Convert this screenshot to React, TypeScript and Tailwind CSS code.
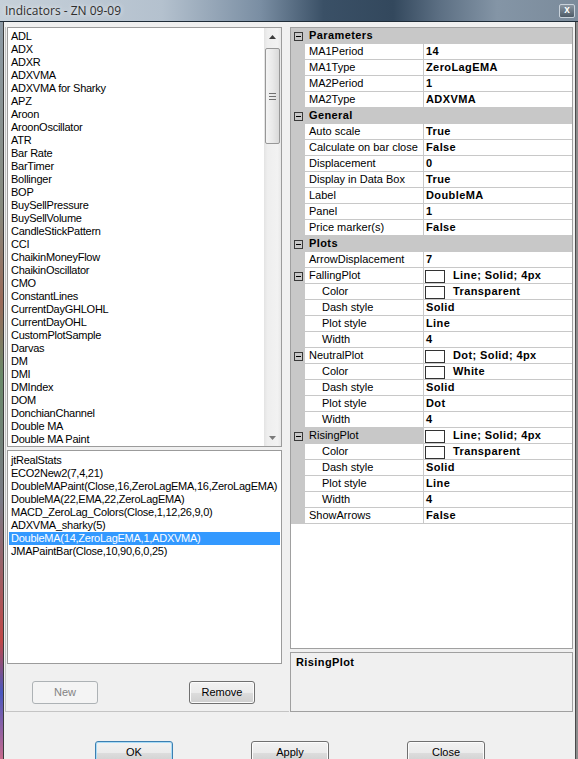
import React from 'react';

const list1 = [
  'ADL', 'ADX', 'ADXR', 'ADXVMA', 'ADXVMA for Sharky', 'APZ', 'Aroon', 'AroonOscillator', 'ATR', 'Bar Rate',
  'BarTimer', 'Bollinger', 'BOP', 'BuySellPressure', 'BuySellVolume', 'CandleStickPattern', 'CCI',
  'ChaikinMoneyFlow', 'ChaikinOscillator', 'CMO', 'ConstantLines', 'CurrentDayGHLOHL', 'CurrentDayOHL',
  'CustomPlotSample', 'Darvas', 'DM', 'DMI', 'DMIndex', 'DOM', 'DonchianChannel', 'Double MA', 'Double MA Paint',
];

const list2 = [
  'jtRealStats',
  'ECO2New2(7,4,21)',
  'DoubleMAPaint(Close,16,ZeroLagEMA,16,ZeroLagEMA)',
  'DoubleMA(22,EMA,22,ZeroLagEMA)',
  'MACD_ZeroLag_Colors(Close,1,12,26,9,0)',
  'ADXVMA_sharky(5)',
  'DoubleMA(14,ZeroLagEMA,1,ADXVMA)',
  'JMAPaintBar(Close,10,90,6,0,25)',
];

type Row = { t: 'cat' | 'p' | 'g' | 'c'; n: string; v?: string; sw?: boolean; sel?: boolean };

const rows: Row[] = [
  { t: 'cat', n: 'Parameters' },
  { t: 'p', n: 'MA1Period', v: '14' },
  { t: 'p', n: 'MA1Type', v: 'ZeroLagEMA' },
  { t: 'p', n: 'MA2Period', v: '1' },
  { t: 'p', n: 'MA2Type', v: 'ADXVMA' },
  { t: 'cat', n: 'General' },
  { t: 'p', n: 'Auto scale', v: 'True' },
  { t: 'p', n: 'Calculate on bar close', v: 'False' },
  { t: 'p', n: 'Displacement', v: '0' },
  { t: 'p', n: 'Display in Data Box', v: 'True' },
  { t: 'p', n: 'Label', v: 'DoubleMA' },
  { t: 'p', n: 'Panel', v: '1' },
  { t: 'p', n: 'Price marker(s)', v: 'False' },
  { t: 'cat', n: 'Plots' },
  { t: 'p', n: 'ArrowDisplacement', v: '7' },
  { t: 'g', n: 'FallingPlot', v: 'Line; Solid; 4px', sw: true },
  { t: 'c', n: 'Color', v: 'Transparent', sw: true },
  { t: 'c', n: 'Dash style', v: 'Solid' },
  { t: 'c', n: 'Plot style', v: 'Line' },
  { t: 'c', n: 'Width', v: '4' },
  { t: 'g', n: 'NeutralPlot', v: 'Dot; Solid; 4px', sw: true },
  { t: 'c', n: 'Color', v: 'White', sw: true },
  { t: 'c', n: 'Dash style', v: 'Solid' },
  { t: 'c', n: 'Plot style', v: 'Dot' },
  { t: 'c', n: 'Width', v: '4' },
  { t: 'g', n: 'RisingPlot', v: 'Line; Solid; 4px', sw: true, sel: true },
  { t: 'c', n: 'Color', v: 'Transparent', sw: true },
  { t: 'c', n: 'Dash style', v: 'Solid' },
  { t: 'c', n: 'Plot style', v: 'Line' },
  { t: 'c', n: 'Width', v: '4' },
  { t: 'p', n: 'ShowArrows', v: 'False' },
];

function MinusBox() {
  return (
    <svg width="9" height="9" viewBox="0 0 9 9" className="block">
      <rect x="0.5" y="0.5" width="8" height="8" fill="none" stroke="#3a3a3a" />
      <line x1="2" y1="4.5" x2="7" y2="4.5" stroke="#000" />
    </svg>
  );
}

function GridRow({ r }: { r: Row }) {
  if (r.t === 'cat') {
    return (
      <div className="flex h-[16px] bg-[#c8c8c8] shrink-0">
        <div className="w-[14px] flex items-center justify-center">
          <MinusBox />
        </div>
        <div className="pl-[4px] font-bold leading-[15px] tracking-[0.4px]">{r.n}</div>
      </div>
    );
  }
  return (
    <div className="flex h-[16px] shrink-0">
      <div className="w-[14px] bg-[#c8c8c8] flex items-center justify-center">
        {r.t === 'g' && <MinusBox />}
      </div>
      <div
        className={
          'w-[119px] border-b border-r border-[#c8c8c8] leading-[15px] whitespace-nowrap overflow-hidden ' +
          (r.t === 'c' ? 'pl-[17px] ' : 'pl-[4px] ') +
          (r.sel ? 'bg-[#c8c8c8]' : 'bg-white')
        }
      >
        {r.n}
      </div>
      <div className="flex-1 border-b border-[#c8c8c8] flex items-start whitespace-nowrap">
        {r.sw ? (
          <>
            <div className="ml-[1px] mt-[2px] w-[20px] h-[13px] border border-[#333] bg-white shrink-0" />
            <span className="ml-[8px] font-bold leading-[15px] tracking-[0.4px]">{r.v}</span>
          </>
        ) : (
          <span className="pl-[2px] font-bold leading-[15px] tracking-[0.4px]">{r.v}</span>
        )}
      </div>
    </div>
  );
}

function Btn({
  children,
  w,
  disabled,
  focused,
}: {
  children: React.ReactNode;
  w: string;
  disabled?: boolean;
  focused?: boolean;
}) {
  const base = 'h-[23px] rounded-[3px] border flex items-center justify-center text-[11px] shrink-0 ';
  if (disabled) {
    return (
      <div className={base + w + ' border-[#adb2b5] bg-[#f4f4f4] text-[#838383]'}>{children}</div>
    );
  }
  return (
    <div
      className={
        base +
        w +
        ' bg-[linear-gradient(#f2f2f2_0%,#ebebeb_50%,#dddddd_51%,#cfcfcf_100%)] text-black ' +
        (focused
          ? 'border-[#3c7fb1] shadow-[inset_0_0_0_1px_#a9dbf6]'
          : 'border-[#707070] shadow-[inset_0_0_0_1px_#fcfcfc]')
      }
    >
      {children}
    </div>
  );
}

function Scrollbar() {
  return (
    <div className="w-[17px] h-full bg-[linear-gradient(90deg,#e3e3e3,#eeeeee_20%,#f2f2f2_80%,#e8e8e8)] flex flex-col items-center shrink-0">
      <div className="h-[18px] w-full flex items-center justify-center">
        <svg width="7" height="4" viewBox="0 0 7 4">
          <polygon points="3.5,0 7,4 0,4" fill="#3c3c3c" />
        </svg>
      </div>
      <div className="mt-[2px] w-[15px] h-[96px] rounded-[2px] border border-[#979797] bg-[linear-gradient(90deg,#f4f4f4,#e9e9e9_50%,#d9d9d9)] flex flex-col items-center justify-center gap-[2px]">
        <div className="w-[7px] h-px bg-[#6f6f6f]" />
        <div className="w-[7px] h-px bg-[#6f6f6f]" />
        <div className="w-[7px] h-px bg-[#6f6f6f]" />
      </div>
      <div className="flex-1" />
      <div className="h-[16px] w-full flex items-center justify-center">
        <svg width="7" height="4" viewBox="0 0 7 4">
          <polygon points="0,0 7,0 3.5,4" fill="#7a7a7a" />
        </svg>
      </div>
    </div>
  );
}

export default function App() {
  return (
    <div className="w-[578px] h-[759px] overflow-hidden bg-[#f0f0f0] flex flex-col font-['Liberation_Sans',Arial,sans-serif] text-[11px] text-black">
      {/* Title bar */}
      <div className="h-[21px] shrink-0 flex items-center justify-between bg-[linear-gradient(90deg,#c6d0d9_0%,#b4c1ce_28%,#7a8ea3_45%,#3a5066_56%,#33485d_68%,#5c6f83_76%,#8495a6_86%,#7b8b9b_100%)]">
        <span className="pl-[5px] font-['Open_Sans','Noto_Sans',sans-serif] text-[12px] text-[#2e2e2e] [text-shadow:0_0_5px_#ffffff]">
          Indicators - ZN 09-09
        </span>
        <div className="mr-[3px] w-[16px] h-[14px] rounded-[2px] border border-[#c9d2db] bg-[linear-gradient(#8a96a2,#4e5b67)] flex items-center justify-center text-white text-[10px] font-bold leading-none pb-[1px]">
          x
        </div>
      </div>
      <div className="h-px shrink-0 bg-[#1f2c38]" />

      {/* Body */}
      <div className="flex-1 flex min-h-0">
        <div className="w-[3px] shrink-0 bg-[linear-gradient(#8c9aa6_0%,#868a7e_25%,#9a6a5a_38%,#6a8a6a_48%,#7a7a86_65%,#c04848_84%,#4a58c0_91%,#c86a8c_100%)]" />
        <div className="w-px shrink-0 bg-[#3c3c3c]" />

        <div className="flex-1 flex flex-col pt-[5px]">
          <div className="flex">
            {/* Left panel */}
            <div className="ml-[1px] w-[284px] border-l border-b border-[#c4c4c4] flex flex-col pb-[7px]">
              <div className="ml-[1px] w-[275px] h-[420px] border border-[#9b9b9b] bg-white flex">
                <div className="flex-1 pt-[2px] pl-[3px] overflow-hidden">
                  {list1.map((s) => (
                    <div key={s} className="h-[13px] leading-[13px] whitespace-nowrap tracking-[-0.25px]">
                      {s}
                    </div>
                  ))}
                </div>
                <Scrollbar />
              </div>
              <div className="mt-[3px] ml-[1px] w-[275px] h-[214px] border border-[#9b9b9b] bg-white pt-[3px] px-[1px]">
                {list2.map((s, i) => (
                  <div
                    key={s}
                    className={
                      'h-[13px] leading-[13px] whitespace-nowrap tracking-[-0.25px] pl-[2px] ' +
                      (i === 6 ? 'bg-[#3399ff] text-white' : '')
                    }
                  >
                    {s}
                  </div>
                ))}
              </div>
              <div className="mt-[17px] flex">
                <div className="ml-[26px]">
                  <Btn w="w-[66px]" disabled>
                    New
                  </Btn>
                </div>
                <div className="ml-[91px]">
                  <Btn w="w-[66px]">Remove</Btn>
                </div>
              </div>
            </div>

            {/* Right panel */}
            <div className="ml-px w-[283px] flex flex-col">
              <div className="h-[622px] border border-[#a0a0a0] bg-white flex flex-col overflow-hidden">
                {rows.map((r, i) => (
                  <GridRow key={i} r={r} />
                ))}
              </div>
              <div className="mt-[3px] h-[60px] border border-[#a0a0a0] bg-[#f0f0f0] pl-[5px] pt-[1px]">
                <span className="font-bold tracking-[0.4px]">RisingPlot</span>
              </div>
            </div>
          </div>

          {/* Bottom buttons */}
          <div className="mt-[29px] flex pl-[91px]">
            <Btn w="w-[78px]" focused>
              OK
            </Btn>
            <div className="ml-[78px]">
              <Btn w="w-[78px]">Apply</Btn>
            </div>
            <div className="ml-[78px]">
              <Btn w="w-[78px]">Close</Btn>
            </div>
          </div>
        </div>

        <div className="w-px shrink-0 bg-[#4a4a4a]" />
        <div className="w-[2px] shrink-0 bg-[#8c8c8c]" />
      </div>
    </div>
  );
}
